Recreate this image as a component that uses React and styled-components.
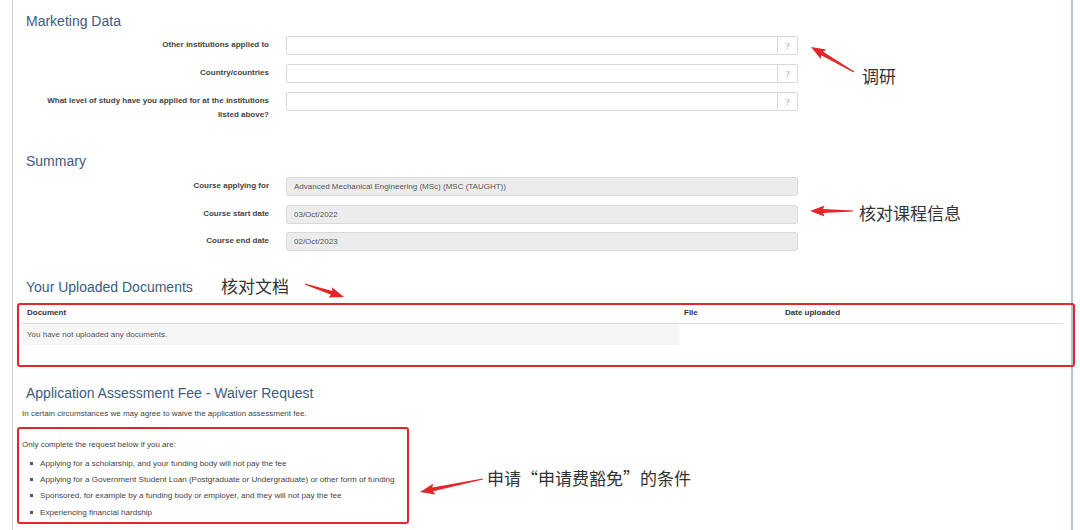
import React from "react";
import styled, { createGlobalStyle } from "styled-components";

const GlobalStyle = createGlobalStyle`
  html, body { margin: 0; padding: 0; background: #fff; }
  body { font-family: "Liberation Sans", Arial, sans-serif; color: #333; }
`;

const Page = styled.div`
  position: relative;
  width: 1080px;
  height: 530px;
  overflow: hidden;
  background: #fff;
`;

const Frame = styled.div`
  margin-left: 12px;
  width: 1061px;
  height: 100%;
  border-left: 1px solid #c8d2dc;
  border-right: 2px solid #b4c5d6;
  padding-top: 12px;
  box-sizing: border-box;
`;

const Heading = styled.h2`
  margin: ${(p) => p.$mt || 0}px 0 0 0;
  padding-left: 13px;
  font-size: 14px;
  line-height: 18px;
  font-weight: normal;
  color: #3d5b7d;
`;

const FormGrid = styled.div`
  display: grid;
  grid-template-columns: 256px 512px;
  column-gap: 17px;
  row-gap: ${(p) => p.$gap}px;
  margin-top: ${(p) => p.$mt}px;
`;

const Label = styled.div`
  text-align: right;
  font-size: 8px;
  font-weight: bold;
  line-height: 14px;
  padding: 2px 0 0 28px;
  color: #444;
`;

const InputGroup = styled.div`
  display: flex;
  height: 19px;
`;

const TextInput = styled.div`
  flex: 1;
  border: 1px solid #d8d8d8;
  border-radius: 2px 0 0 2px;
  background: #fff;
`;

const HelpAddon = styled.div`
  width: 19px;
  border: 1px solid #d8d8d8;
  border-left: none;
  border-radius: 0 2px 2px 0;
  display: flex;
  align-items: center;
  justify-content: center;
  font-family: "Liberation Serif", serif;
  font-size: 9px;
  color: #999;
`;

const ReadOnly = styled.div`
  height: 19px;
  box-sizing: border-box;
  border: 1px solid #d9d9d9;
  border-radius: 3px;
  background: #ececec;
  padding-left: 7px;
  display: flex;
  align-items: center;
  font-size: 8px;
  color: #555;
`;

const DocTable = styled.table`
  margin: 6px 0 0 9px;
  width: 1041px;
  border-collapse: collapse;
  table-layout: fixed;
  font-size: 8px;
`;

const HeadCell = styled.th`
  text-align: left;
  font-weight: bold;
  color: #333;
  padding: 5px 5px;
  line-height: 11px;
  border-bottom: 1px solid #dcdcdc;
  width: ${(p) => p.$w || "auto"};
`;

const BodyCell = styled.td`
  padding: 5px 5px;
  line-height: 11px;
  color: #555;
  background: ${(p) => (p.$shade ? "#f6f6f6" : "transparent")};
`;

const Para = styled.p`
  margin: ${(p) => p.$mt}px 0 0 9px;
  font-size: 8px;
  line-height: 12px;
  color: #444;
`;

const Bullets = styled.ul`
  margin: 4px 0 0 9px;
  padding: 0;
  list-style: none;
`;

const Bullet = styled.li`
  display: flex;
  align-items: center;
  padding-left: 8px;
  height: 16.3px;
  font-size: 8.1px;
  color: #444;

  &::before {
    content: "";
    width: 3px;
    height: 3px;
    background: #555;
    margin-right: 7px;
  }
`;

/* annotation layer drawn over the screenshot */
const Overlay = styled.svg`
  position: absolute;
  left: 0;
  top: 0;
  pointer-events: none;
`;

const RedBox = styled.div`
  position: absolute;
  left: ${(p) => p.$x}px;
  top: ${(p) => p.$y}px;
  width: ${(p) => p.$w}px;
  height: ${(p) => p.$h}px;
  border: 2px solid #e3262a;
  border-radius: 3px;
  box-sizing: border-box;
`;

const Note = styled.div`
  position: absolute;
  left: ${(p) => p.$x}px;
  top: ${(p) => p.$y - 11}px;
  font-family: "Noto Sans CJK SC", "Liberation Sans", sans-serif;
  font-size: 17px;
  line-height: 22px;
  color: #333;
  white-space: nowrap;
`;

const arrowPoints = (x1, y1, x2, y2) => {
  const dx = x2 - x1;
  const dy = y2 - y1;
  const len = Math.hypot(dx, dy);
  const ux = dx / len;
  const uy = dy / len;
  const nx = -uy;
  const ny = ux;
  const headLen = 13;
  const bx = x2 - ux * headLen;
  const by = y2 - uy * headLen;
  const tail = 0.5;
  const neck = 2;
  const head = 5.5;
  const pts = [
    [x1 + nx * tail, y1 + ny * tail],
    [bx + nx * neck, by + ny * neck],
    [bx - ux * 1.5 + nx * head, by - uy * 1.5 + ny * head],
    [x2, y2],
    [bx - ux * 1.5 - nx * head, by - uy * 1.5 - ny * head],
    [bx - nx * neck, by - ny * neck],
    [x1 - nx * tail, y1 - ny * tail],
  ];
  return pts.map((p) => p.map((v) => v.toFixed(1)).join(",")).join(" ");
};

const arrows = [
  [854, 72, 811, 47],
  [853, 211, 810, 211],
  [305, 284, 344, 297],
  [483, 479, 420, 492],
];

const notes = [
  { x: 862, y: 76, text: "调研" },
  { x: 859, y: 213, text: "核对课程信息" },
  { x: 221, y: 286, text: "核对文档" },
  { x: 487, y: 478, text: "申请“申请费豁免”的条件" },
];

const marketing = [
  "Other institutions applied to",
  "Country/countries",
  "What level of study have you applied for at the institutions listed above?",
];

const summary = [
  ["Course applying for", "Advanced Mechanical Engineering (MSc) (MSC (TAUGHT))"],
  ["Course start date", "03/Oct/2022"],
  ["Course end date", "02/Oct/2023"],
];

const reasons = [
  "Applying for a scholarship, and your funding body will not pay the fee",
  "Applying for a Government Student Loan (Postgraduate or Undergraduate) or other form of funding",
  "Sponsored, for example by a funding body or employer, and they will not pay the fee",
  "Experiencing financial hardship",
];

export default function App() {
  return (
    <Page>
      <GlobalStyle />
      <Frame>
        <Heading>Marketing Data</Heading>
        <FormGrid $gap={9} $mt={6}>
          {marketing.map((label) => (
            <React.Fragment key={label}>
              <Label>{label}</Label>
              <InputGroup>
                <TextInput />
                <HelpAddon>?</HelpAddon>
              </InputGroup>
            </React.Fragment>
          ))}
        </FormGrid>

        <Heading $mt={30}>Summary</Heading>
        <FormGrid $gap={8.5} $mt={7}>
          {summary.map(([label, value]) => (
            <React.Fragment key={label}>
              <Label>{label}</Label>
              <ReadOnly>{value}</ReadOnly>
            </React.Fragment>
          ))}
        </FormGrid>

        <Heading $mt={27}>Your Uploaded Documents</Heading>
        <DocTable>
          <thead>
            <tr>
              <HeadCell $w="647px">Document</HeadCell>
              <HeadCell $w="91px">File</HeadCell>
              <HeadCell>Date uploaded</HeadCell>
            </tr>
          </thead>
          <tbody>
            <tr>
              <BodyCell $shade>You have not uploaded any documents.</BodyCell>
              <BodyCell />
              <BodyCell />
            </tr>
          </tbody>
        </DocTable>

        <Heading $mt={39}>Application Assessment Fee - Waiver Request</Heading>
        <Para $mt={6}>In certain circumstances we may agree to waive the application assessment fee.</Para>
        <Para $mt={19}>Only complete the request below if you are:</Para>
        <Bullets>
          {reasons.map((r) => (
            <Bullet key={r}>{r}</Bullet>
          ))}
        </Bullets>
      </Frame>

      <RedBox $x={17} $y={303} $w={1058} $h={64} />
      <RedBox $x={17} $y={427} $w={392} $h={97} />
      <Overlay width="1080" height="530" viewBox="0 0 1080 530">
        {arrows.map((a, i) => (
          <polygon key={i} points={arrowPoints(...a)} fill="#e3262a" />
        ))}
      </Overlay>
      {notes.map((n) => (
        <Note key={n.text} $x={n.x} $y={n.y}>
          {n.text}
        </Note>
      ))}
    </Page>
  );
}
